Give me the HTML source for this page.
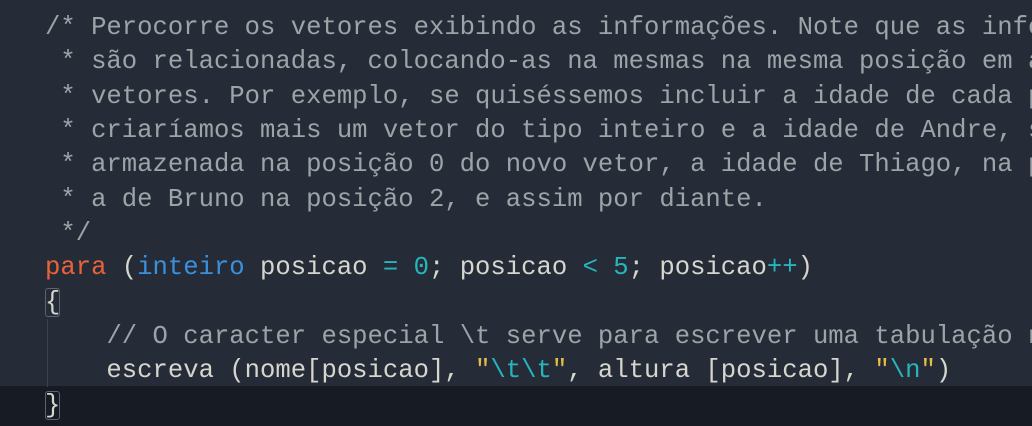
<!DOCTYPE html>
<html><head><meta charset="utf-8"><style>
html,body{margin:0;padding:0;}
body{width:1032px;height:426px;overflow:hidden;background:#252c37;position:relative;
font-family:"Liberation Mono","DejaVu Sans Mono",monospace;font-size:25.6px;}
.bot{position:absolute;left:0;top:386px;width:1032px;height:40px;background:#171c24;}
pre{position:absolute;left:45px;top:11px;width:987px;height:415px;overflow:hidden;margin:0;font:inherit;line-height:34.35px;color:#d6d6cf;white-space:pre;}
.c{color:#9ea3a7}
.k{color:#ec6238}
.t{color:#3a90dc}
.n{color:#27b5bd}
.s{color:#e6bd4a}
.br{outline:1.5px solid #5b6470;outline-offset:-1px;border-radius:3px}
.guide{position:absolute;left:47px;top:319px;width:1px;height:68px;background:#3a424d}
</style></head><body>
<div class="bot"></div>
<div class="guide"></div>
<pre><span class="c">/* Perocorre os vetores exibindo as informações. Note que as info
 * são relacionadas, colocando-as na mesmas na mesma posição em a
 * vetores. Por exemplo, se quiséssemos incluir a idade de cada p
 * criaríamos mais um vetor do tipo inteiro e a idade de Andre, s
 * armazenada na posição 0 do novo vetor, a idade de Thiago, na p
 * a de Bruno na posição 2, e assim por diante.
 */</span>
<span class="k">para</span> (<span class="t">inteiro</span> posicao <span class="n">=</span> <span class="n">0</span>; posicao <span class="n">&lt;</span> <span class="n">5</span>; posicao<span class="n">++</span>)
<span class="br">{</span>
    <span class="c">// O caracter especial \t serve para escrever uma tabulação n</span>
    escreva (nome[posicao], <span class="s">"</span><span class="n">\t\t</span><span class="s">"</span>, altura [posicao], <span class="s">"</span><span class="n">\n</span><span class="s">"</span>)
<span class="br">}</span></pre>
</body></html>
